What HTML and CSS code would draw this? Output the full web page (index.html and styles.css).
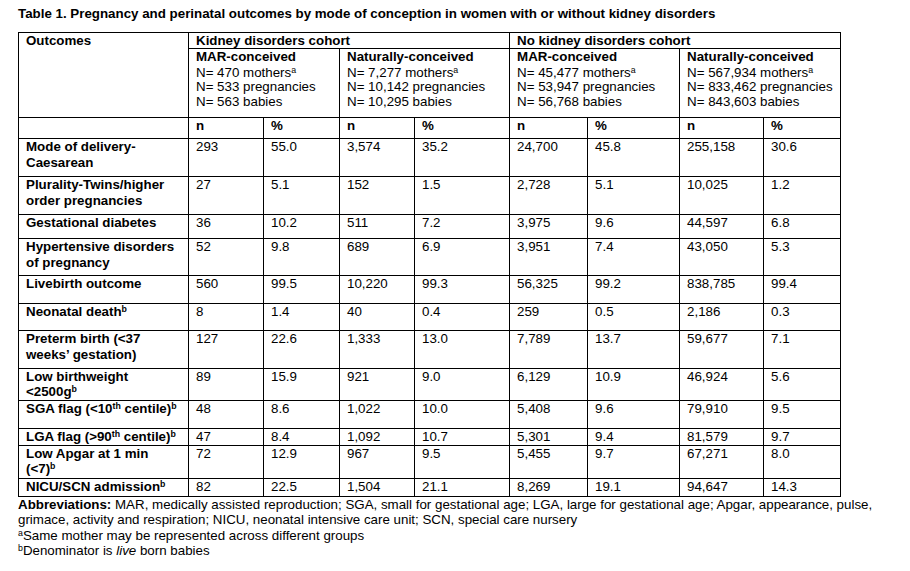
FILE: index.html
```html
<!DOCTYPE html>
<html lang="en">
<head>
<meta charset="utf-8">
<title>Table 1</title>
<link rel="stylesheet" href="styles.css">
</head>
<body>
<div class="page">
  <div class="title">Table 1. Pregnancy and perinatal outcomes by mode of conception in women with or without kidney disorders</div>
  <table class="tbl">
    <colgroup>
      <col class="c-out"><col class="c75"><col class="c76"><col class="c75"><col class="c95"><col class="c78"><col class="c92"><col class="c84"><col class="c77">
    </colgroup>
    <tr class="h15">
      <th rowspan="2" class="b">Outcomes</th>
      <th colspan="4" class="b">Kidney disorders cohort</th>
      <th colspan="4" class="b">No kidney disorders cohort</th>
    </tr>
    <tr class="h69">
      <th colspan="2" class="grp"><div class="gl">MAR-conceived</div><div class="nl">N= 470 mothers<sup>a</sup></div><div class="nl">N= 533 pregnancies</div><div class="nl">N= 563 babies</div></th>
      <th colspan="2" class="grp"><div class="gl">Naturally-conceived</div><div class="nl">N= 7,277 mothers<sup>a</sup></div><div class="nl">N= 10,142 pregnancies</div><div class="nl">N= 10,295 babies</div></th>
      <th colspan="2" class="grp"><div class="gl">MAR-conceived</div><div class="nl">N= 45,477 mothers<sup>a</sup></div><div class="nl">N= 53,947 pregnancies</div><div class="nl">N= 56,768 babies</div></th>
      <th colspan="2" class="grp"><div class="gl">Naturally-conceived</div><div class="nl">N= 567,934 mothers<sup>a</sup></div><div class="nl">N= 833,462 pregnancies</div><div class="nl">N= 843,603 babies</div></th>
    </tr>
    <tr class="h21 nrow">
      <th></th>
      <th class="b">n</th><th class="b">%</th>
      <th class="b">n</th><th class="b">%</th>
      <th class="b">n</th><th class="b">%</th>
      <th class="b">n</th><th class="b">%</th>
    </tr>
    <tr class="h38"><th class="lbl">Mode of delivery-<br>Caesarean</th><td>293</td><td>55.0</td><td>3,574</td><td>35.2</td><td>24,700</td><td>45.8</td><td>255,158</td><td>30.6</td></tr>
    <tr class="h38"><th class="lbl">Plurality-Twins/higher<br>order pregnancies</th><td>27</td><td>5.1</td><td>152</td><td>1.5</td><td>2,728</td><td>5.1</td><td>10,025</td><td>1.2</td></tr>
    <tr class="h24"><th class="lbl">Gestational diabetes</th><td>36</td><td>10.2</td><td>511</td><td>7.2</td><td>3,975</td><td>9.6</td><td>44,597</td><td>6.8</td></tr>
    <tr class="h37"><th class="lbl">Hypertensive disorders<br>of pregnancy</th><td>52</td><td>9.8</td><td>689</td><td>6.9</td><td>3,951</td><td>7.4</td><td>43,050</td><td>5.3</td></tr>
    <tr class="h28"><th class="lbl">Livebirth outcome</th><td>560</td><td>99.5</td><td>10,220</td><td>99.3</td><td>56,325</td><td>99.2</td><td>838,785</td><td>99.4</td></tr>
    <tr class="h27"><th class="lbl">Neonatal death<sup>b</sup></th><td>8</td><td>1.4</td><td>40</td><td>0.4</td><td>259</td><td>0.5</td><td>2,186</td><td>0.3</td></tr>
    <tr class="h38"><th class="lbl">Preterm birth (&lt;37<br>weeks’ gestation)</th><td>127</td><td>22.6</td><td>1,333</td><td>13.0</td><td>7,789</td><td>13.7</td><td>59,677</td><td>7.1</td></tr>
    <tr class="h32 tight"><th class="lbl">Low birthweight<br>&lt;2500g<sup>b</sup></th><td>89</td><td>15.9</td><td>921</td><td>9.0</td><td>6,129</td><td>10.9</td><td>46,924</td><td>5.6</td></tr>
    <tr class="h28"><th class="lbl">SGA flag (&lt;10<sup>th</sup> centile)<sup>b</sup></th><td>48</td><td>8.6</td><td>1,022</td><td>10.0</td><td>5,408</td><td>9.6</td><td>79,910</td><td>9.5</td></tr>
    <tr class="h17"><th class="lbl">LGA flag (&gt;90<sup>th</sup> centile)<sup>b</sup></th><td>47</td><td>8.4</td><td>1,092</td><td>10.7</td><td>5,301</td><td>9.4</td><td>81,579</td><td>9.7</td></tr>
    <tr class="h33 tight"><th class="lbl">Low Apgar at 1 min<br>(&lt;7)<sup>b</sup></th><td>72</td><td>12.9</td><td>967</td><td>9.5</td><td>5,455</td><td>9.7</td><td>67,271</td><td>8.0</td></tr>
    <tr class="h18"><th class="lbl">NICU/SCN admission<sup>b</sup></th><td>82</td><td>22.5</td><td>1,504</td><td>21.1</td><td>8,269</td><td>19.1</td><td>94,647</td><td>14.3</td></tr>
  </table>
  <div class="notes">
    <p class="abbr"><b>Abbreviations:</b> MAR, medically assisted reproduction; SGA, small for gestational age; LGA, large for gestational age; Apgar, appearance, pulse, grimace, activity and respiration; NICU, neonatal intensive care unit; SCN, special care nursery</p>
    <p><sup>a</sup>Same mother may be represented across different groups</p>
    <p><sup>b</sup>Denominator is <i>live</i> born babies</p>
  </div>
</div>
</body>
</html>
```

FILE: styles.css
```css
html, body {
  margin: 0;
  padding: 0;
  background: #fff;
}

body {
  font-family: "Liberation Sans", Arial, sans-serif;
  font-size: 13.33px;
  color: #000;
}

.page {
  padding: 6px 0 0 18px;
}

.title {
  font-weight: bold;
  line-height: 15px;
  margin-bottom: 11px;
}

.tbl {
  border-collapse: collapse;
  table-layout: fixed;
  width: 822px;
}

.c-out { width: 170px; }
.c75 { width: 75px; }
.c76 { width: 76px; }
.c78 { width: 78px; }
.c95 { width: 95px; }
.c92 { width: 92px; }
.c84 { width: 84px; }
.c77 { width: 77px; }

.tbl th,
.tbl td {
  border: 1px solid #000;
  padding: 0 4px 0 7px;
  vertical-align: top;
  text-align: left;
  line-height: 16px;
  font-weight: normal;
}

.tbl th.b,
.tbl th.lbl {
  font-weight: bold;
}

.tbl th.b {
  padding-top: 0;
  line-height: 15px;
}

.tbl .nrow th {
  line-height: 16px;
}

.grp {
  padding-top: 1px;
}

.gl {
  font-weight: bold;
  line-height: 16.5px;
}

.nl {
  line-height: 14.5px;
}

.tight th,
.tight td {
  line-height: 15px;
}

sup {
  font-size: 0.66em;
  line-height: 0;
  vertical-align: 0.45em;
}

.h15 { height: 15px; }
.h17 { height: 17px; }
.h18 { height: 18px; }
.h21 { height: 21px; }
.h24 { height: 24px; }
.h27 { height: 27px; }
.h28 { height: 28px; }
.h32 { height: 32px; }
.h33 { height: 33px; }
.h37 { height: 37px; }
.h38 { height: 38px; }
.h69 { height: 69px; }

.notes {
  width: 880px;
  line-height: 15.3px;
}

.notes p {
  margin: 0;
}
```
